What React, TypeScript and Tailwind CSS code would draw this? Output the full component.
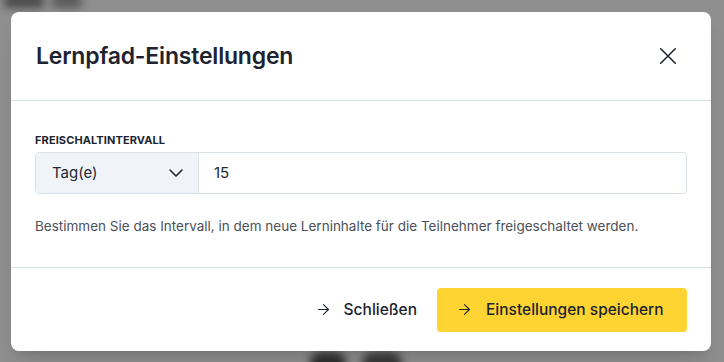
import { ArrowRight, ChevronDown } from "lucide-react";

const font = { fontFamily: "Inter, 'Noto Sans', sans-serif" };

function CloseIcon() {
  return (
    <svg width="16" height="16" viewBox="0 0 16 16" fill="none" stroke="#1f2430" strokeWidth="1.5" strokeLinecap="round">
      <path d="M0.75 0.75 15.25 15.25M15.25 0.75 0.75 15.25" />
    </svg>
  );
}

export default function App() {
  return (
    <div className="relative h-[362px] w-[724px] overflow-hidden bg-[#8f8f8f]" style={font}>
      {/* page behind the overlay, blurred */}
      <div className="flex h-full flex-col justify-between blur-[4px]">
        <div className="-mt-[6px] flex gap-2 pl-1">
          <div className="h-[14px] w-[40px] rounded bg-[#4a4a4a]" />
          <div className="h-[14px] w-[30px] rounded bg-[#5a5a5a]" />
        </div>
        <div className="-mb-[12px] flex gap-4 pl-[310px]">
          <div className="h-[22px] w-[36px] rounded-full bg-[#2f2f2f]" />
          <div className="h-[22px] w-[40px] rounded-full bg-[#3a3a3a]" />
        </div>
      </div>

      <div className="absolute inset-0 flex items-start pl-[11px] pt-[12px]">
        <div className="flex h-[339px] w-[700px] flex-col rounded-lg bg-white shadow-xl">
          <div className="flex h-[89px] items-center justify-between border-b border-[#d6dfe4] pl-[25px] pr-[27px]">
            <h1 className="pt-[1px] text-[23px] font-semibold tracking-[-0.2px] text-[#1e2330]">
              Lernpfad-Einstellungen
            </h1>
            <button className="flex h-8 w-8 items-center justify-center">
              <CloseIcon />
            </button>
          </div>

          <div className="px-[24px] pt-[31px]">
            <label className="block text-[11px] font-bold leading-4 tracking-[0.1px] text-[#1e2330]">
              FREISCHALTINTERVALL
            </label>
            <div className="mt-[4px] flex h-[42px] overflow-hidden rounded border border-[#d9e1e7]">
              <div className="flex w-[163px] items-center justify-between border-r border-[#d9e1e7] bg-[#f0f4f8] pl-4 pr-[10px]">
                <span className="text-[15px] text-[#222831]">Tag(e)</span>
                <ChevronDown size={24} strokeWidth={1.6} color="#222831" />
              </div>
              <div className="flex flex-1 items-center pl-[15px] text-[15px] text-[#222831]">15</div>
            </div>
            <p className="mt-[22px] text-[13.5px] leading-5 text-[#4b5059]">
              Bestimmen Sie das Intervall, in dem neue Lerninhalte für die Teilnehmer freigeschaltet werden.
            </p>
          </div>

          <div className="mt-auto flex h-[84px] items-center justify-end gap-1 border-t border-[#d6dfe4] pr-[24px]">
            <button className="flex h-[44px] items-center gap-[12px] px-4 text-[15.5px] font-medium text-[#1e2330]">
              <ArrowRight size={17} strokeWidth={1.5} />
              Schließen
            </button>
            <button className="flex h-[44px] w-[250px] items-center gap-[13px] rounded bg-[#fdd431] pl-[19px] text-[15.5px] font-medium text-[#1e2330]">
              <ArrowRight size={17} strokeWidth={1.5} />
              Einstellungen speichern
            </button>
          </div>
        </div>
      </div>
    </div>
  );
}
